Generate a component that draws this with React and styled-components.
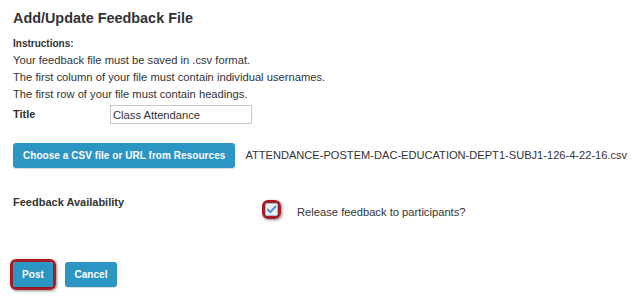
import React from 'react'
import styled, { createGlobalStyle } from 'styled-components'

const GlobalStyle = createGlobalStyle`
    body {
        margin: 0;
        background: #fff;
        font-family: "Liberation Sans", Arial, sans-serif;
        color: #333;
    }
`

const Page = styled.div`
    width: 640px;
    height: 304px;
    box-sizing: border-box;
    padding: 8px 0 0 13px;
    overflow: hidden;
`

const Heading = styled.h2`
    margin: 0;
    font-size: 14.4px;
    line-height: 20px;
    font-weight: 700;
    color: #333;
`

const Instructions = styled.div`
    margin-top: 7px;
    font-size: 11.2px;
    line-height: 17px;
`

const InstructionsTitle = styled.div`
    font-size: 10px;
    font-weight: 700;
`

const FieldRow = styled.div`
    display: flex;
    align-items: flex-start;
    margin-top: ${props => props.gap || 0}px;
`

const Label = styled.div`
    width: ${props => props.width}px;
    flex-shrink: 0;
    font-size: 11px;
    font-weight: 700;
    line-height: 15px;
    padding-top: ${props => props.top || 0}px;
`

const TextInput = styled.input`
    width: 142px;
    height: 19px;
    box-sizing: border-box;
    border: 1px solid #c8c8c8;
    padding: 0 2px;
    font-family: "Liberation Sans", Arial, sans-serif;
    font-size: 11.2px;
    color: #333;
    outline: none;
`

const Button = styled.button`
    height: 25px;
    width: ${props => (props.width ? props.width + 'px' : 'auto')};
    padding: 0 ${props => (props.width ? 0 : 10)}px;
    border: none;
    border-radius: 3px;
    background: #2b95c3;
    color: #fff;
    font-family: "Liberation Sans", Arial, sans-serif;
    font-size: 10px;
    font-weight: 700;
    letter-spacing: 0.05px;
    cursor: pointer;
    box-shadow: 0 1px 1px rgba(0, 0, 0, 0.15);
`

const FileName = styled.span`
    margin-left: 10px;
    font-size: 11.1px;
    line-height: 25px;
`

const Highlight = styled.div`
    display: inline-flex;
    border: 3px solid #a51d24;
    border-radius: 6px;
    box-shadow: 1px 1px 3px rgba(0, 0, 0, 0.45);
    margin: ${props => props.margin || 0};
`

const CheckText = styled.span`
    margin-left: 16px;
    margin-top: 10px;
    font-size: 11.2px;
    line-height: 15px;
`

const Actions = styled.div`
    display: flex;
    align-items: center;
    gap: 9px;
    margin-top: 39px;
    margin-left: -3px;
`

const CheckBox = () => (
    <svg width="13" height="13" viewBox="0 0 13 13">
        <rect x="0.5" y="0.5" width="12" height="12" rx="2" fill="#e9eff5" stroke="#a9bccb" />
        <path d="M2.8 6.6 L5.3 9.1 L10.4 3.6" fill="none" stroke="#3a8fd6" strokeWidth="2" strokeLinecap="round" strokeLinejoin="round" />
    </svg>
)

const App = () => (
    <Page>
        <GlobalStyle />
        <Heading>Add/Update Feedback File</Heading>
        <Instructions>
            <InstructionsTitle>Instructions:</InstructionsTitle>
            <div>Your feedback file must be saved in .csv format.</div>
            <div>The first column of your file must contain individual usernames.</div>
            <div>The first row of your file must contain headings.</div>
        </Instructions>
        <FieldRow gap={2}>
            <Label width={97} top={2}>Title</Label>
            <TextInput defaultValue="Class Attendance" />
        </FieldRow>
        <FieldRow gap={19}>
            <Button>Choose a CSV file or URL from Resources</Button>
            <FileName>ATTENDANCE-POSTEM-DAC-EDUCATION-DEPT1-SUBJ1-126-4-22-16.csv</FileName>
        </FieldRow>
        <FieldRow gap={27}>
            <Label width={249}>Feedback Availability</Label>
            <Highlight margin="5px 0 0 0">
                <CheckBox />
            </Highlight>
            <CheckText>Release feedback to participants?</CheckText>
        </FieldRow>
        <Actions>
            <Highlight>
                <Button width={40}>Post</Button>
            </Highlight>
            <Button width={52}>Cancel</Button>
        </Actions>
    </Page>
)

export default App
